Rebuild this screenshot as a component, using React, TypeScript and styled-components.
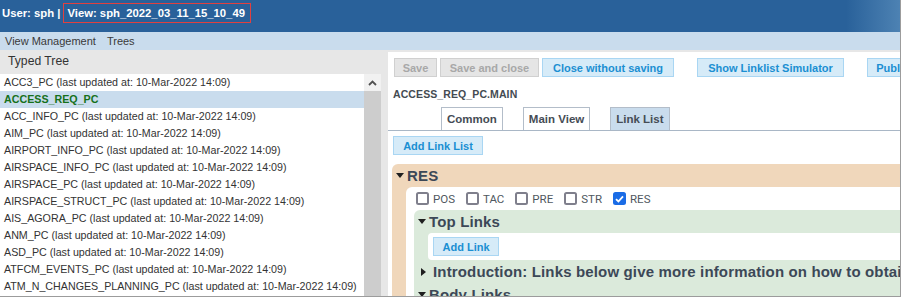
import React from 'react';
import styled, { createGlobalStyle } from 'styled-components';

const GlobalStyle = createGlobalStyle`
  body {
    margin: 0;
    background: #ffffff;
    font-family: "Liberation Sans", Arial, sans-serif;
  }
`;

const Frame = styled.div`
  width: 900px;
  height: 296px;
  border-right: 1px solid #9c9c9c;
  border-bottom: 1px solid #9c9c9c;
  display: flex;
  flex-direction: column;
  overflow: hidden;
  background: #e7e7e7;
`;

const TopBar = styled.div`
  height: 32px;
  flex-shrink: 0;
  box-sizing: border-box;
  padding: 3px 0 0 2px;
  display: flex;
  align-items: flex-start;
  background: linear-gradient(to right, #29619a 0%, #29619a 94%, #4d82b3 100%);
  color: #ffffff;
  font-weight: bold;
  font-size: 11.3px;
  white-space: nowrap;
`;

const UserText = styled.span`
  line-height: 20px;
  margin-right: 3px;
`;

const ViewBox = styled.span`
  height: 20px;
  line-height: 18px;
  box-sizing: border-box;
  padding: 0 5px 0 3px;
  border: 1px solid #e2403f;
`;

const MenuBar = styled.div`
  height: 18px;
  flex-shrink: 0;
  display: flex;
  align-items: center;
  background: #c9dced;
  font-size: 11px;
  color: #3a3a3a;
  padding-left: 5px;
  gap: 11px;
`;

const MenuItem = styled.span`
  line-height: 18px;
`;

const Body = styled.div`
  flex: 1;
  display: flex;
  min-height: 0;
`;

const LeftPanel = styled.div`
  width: 381px;
  flex-shrink: 0;
  display: flex;
  flex-direction: column;
`;

const PanelHeader = styled.div`
  height: 24px;
  box-sizing: border-box;
  padding: 4px 0 0 8px;
  font-size: 12.2px;
  color: #333;
`;

const ListArea = styled.div`
  flex: 1;
  display: flex;
  min-height: 0;
`;

const List = styled.div`
  width: 364px;
  background: #ffffff;
  overflow: hidden;
`;

const Row = styled.div<{ $selected?: boolean }>`
  height: 17px;
  line-height: 17px;
  padding-left: 4px;
  font-size: 10.7px;
  white-space: nowrap;
  background: ${p => (p.$selected ? '#c9dced' : 'transparent')};
  color: ${p => (p.$selected ? '#16701a' : '#333')};
  font-weight: ${p => (p.$selected ? 'bold' : 'normal')};
`;

const ScrollBar = styled.div`
  width: 17px;
  display: flex;
  flex-direction: column;
  background: #cdcdcd;
`;

const ScrollButton = styled.div`
  height: 17px;
  background: #f1f1f1;
  display: flex;
  align-items: center;
  justify-content: center;
`;

const RightPanel = styled.div`
  flex: 1;
  margin: 2px 0 0 7px;
  background: #ffffff;
  overflow: hidden;
  box-sizing: border-box;
  padding: 6px 0 0 5px;
  display: flex;
  flex-direction: column;
  align-items: flex-start;
`;

const ButtonRow = styled.div`
  display: flex;
  gap: 3px;
  flex-shrink: 0;
  margin-left: 1px;
`;

const Button = styled.div<{ $w: number; $disabled?: boolean; $spaced?: boolean }>`
  width: ${p => p.$w}px;
  height: 19px;
  box-sizing: border-box;
  flex-shrink: 0;
  display: flex;
  align-items: center;
  justify-content: center;
  white-space: nowrap;
  overflow: hidden;
  font-size: 11px;
  font-weight: bold;
  margin-left: ${p => (p.$spaced ? '20px' : '0')};
  background: ${p => (p.$disabled ? '#e5e5e5' : '#d6ebf8')};
  border: 1px solid ${p => (p.$disabled ? '#d0d0d0' : '#a9d6f3')};
  color: ${p => (p.$disabled ? '#a8a8a8' : '#1b8fd2')};
`;

const Title = styled.div`
  margin-top: 9px;
  height: 16px;
  line-height: 16px;
  font-size: 10.5px;
  font-weight: bold;
  color: #444b52;
  letter-spacing: 0.1px;
`;

const TabBar = styled.div`
  margin: 5px 0 0 -5px;
  padding-left: 53px;
  width: 700px;
  height: 24px;
  box-sizing: border-box;
  display: flex;
  align-items: flex-end;
  gap: 20px;
  border-bottom: 1px solid #a9b7c6;
  flex-shrink: 0;
`;

const Tab = styled.div<{ $active?: boolean }>`
  height: 23px;
  box-sizing: border-box;
  padding: 0 5px;
  display: flex;
  align-items: center;
  font-size: 11.5px;
  font-weight: bold;
  color: #454c55;
  border: 1px solid #b3bdc9;
  border-bottom: none;
  background: ${p => (p.$active ? '#c9dced' : '#ffffff')};
`;

const AddButton = styled(Button)`
  margin-top: 5px;
`;

const Section = styled.div<{ $tone: 'orange' | 'green' }>`
  flex-shrink: 0;
  border-radius: 6px;
  background: ${p => (p.$tone === 'orange' ? '#f0d7bb' : '#dbeadb')};
  padding-left: ${p => (p.$tone === 'orange' ? '14px' : '0')};
`;

const ResSection = styled(Section)`
  margin: 9px 0 0 -1px;
  width: 640px;
`;

const SectionHeader = styled.div<{ $indent: number }>`
  height: 23px;
  margin-left: ${p => p.$indent}px;
  display: flex;
  align-items: center;
  gap: 3px;
  font-size: 15px;
  font-weight: bold;
  color: #3c4857;
  white-space: nowrap;
  letter-spacing: 0.15px;
`;

const Caret = styled.span<{ $open?: boolean }>`
  width: 0;
  height: 0;
  flex-shrink: 0;
  margin-right: ${p => (p.$open ? '0' : '4px')};
  margin-left: ${p => (p.$open ? '0' : '3px')};
  border-style: solid;
  border-color: transparent;
  ${p =>
    p.$open
      ? 'border-width: 5px 4.5px 0 4.5px; border-top-color: #1f1f1f;'
      : 'border-width: 4.5px 0 4.5px 5px; border-left-color: #1f1f1f;'}
`;

const Inner = styled.div`
  background: #ffffff;
  border-radius: 6px 0 0 6px;
  padding-left: 8px;
`;

const CheckRow = styled.div`
  height: 23px;
  display: flex;
  align-items: center;
  padding-left: 2px;
`;

const CheckItem = styled.label`
  display: flex;
  align-items: center;
  gap: 4px;
  margin-right: 11px;
  font-family: Roboto, "Liberation Sans", sans-serif;
  font-size: 11.5px;
  color: #505860;
`;

const Box = styled.span<{ $checked?: boolean }>`
  width: 13px;
  height: 13px;
  box-sizing: border-box;
  border-radius: 2.5px;
  display: flex;
  align-items: center;
  justify-content: center;
  border: ${p => (p.$checked ? 'none' : '2px solid #7f7f8c')};
  background: ${p => (p.$checked ? '#1a6ce6' : '#ffffff')};
`;

const GreenSection = styled(Section)`
  border-radius: 6px 0 0 6px;
`;

const LinkBox = styled.div`
  margin-left: 14px;
  height: 27px;
  box-sizing: border-box;
  padding: 4px 0 0 5px;
  background: #ffffff;
  border-radius: 4px 0 0 4px;
`;

const items = [
  'ACC3_PC (last updated at: 10-Mar-2022 14:09)',
  'ACCESS_REQ_PC',
  'ACC_INFO_PC (last updated at: 10-Mar-2022 14:09)',
  'AIM_PC (last updated at: 10-Mar-2022 14:09)',
  'AIRPORT_INFO_PC (last updated at: 10-Mar-2022 14:09)',
  'AIRSPACE_INFO_PC (last updated at: 10-Mar-2022 14:09)',
  'AIRSPACE_PC (last updated at: 10-Mar-2022 14:09)',
  'AIRSPACE_STRUCT_PC (last updated at: 10-Mar-2022 14:09)',
  'AIS_AGORA_PC (last updated at: 10-Mar-2022 14:09)',
  'ANM_PC (last updated at: 10-Mar-2022 14:09)',
  'ASD_PC (last updated at: 10-Mar-2022 14:09)',
  'ATFCM_EVENTS_PC (last updated at: 10-Mar-2022 14:09)',
  'ATM_N_CHANGES_PLANNING_PC (last updated at: 10-Mar-2022 14:09)',
];

const checks = [
  { label: 'POS', checked: false },
  { label: 'TAC', checked: false },
  { label: 'PRE', checked: false },
  { label: 'STR', checked: false },
  { label: 'RES', checked: true },
];

const App: React.FC = () => {
  return (
    <>
      <GlobalStyle />
      <Frame>
        <TopBar>
          <UserText>User: sph |</UserText>
          <ViewBox>View: sph_2022_03_11_15_10_49</ViewBox>
        </TopBar>
        <MenuBar>
          <MenuItem>View Management</MenuItem>
          <MenuItem>Trees</MenuItem>
        </MenuBar>
        <Body>
          <LeftPanel>
            <PanelHeader>Typed Tree</PanelHeader>
            <ListArea>
              <List>
                {items.map((it, i) => (
                  <Row key={it} $selected={i === 1}>
                    {it}
                  </Row>
                ))}
              </List>
              <ScrollBar>
                <ScrollButton>
                  <svg width="9" height="6" viewBox="0 0 9 6">
                    <polyline points="1,5 4.5,1.5 8,5" fill="none" stroke="#505050" strokeWidth="1.8" />
                  </svg>
                </ScrollButton>
              </ScrollBar>
            </ListArea>
          </LeftPanel>
          <RightPanel>
            <ButtonRow>
              <Button $w={43} $disabled>Save</Button>
              <Button $w={99} $disabled>Save and close</Button>
              <Button $w={132}>Close without saving</Button>
              <Button $w={147} $spaced>Show Linklist Simulator</Button>
              <Button $w={58} $spaced>Publish</Button>
            </ButtonRow>
            <Title>ACCESS_REQ_PC.MAIN</Title>
            <TabBar>
              <Tab>Common</Tab>
              <Tab>Main View</Tab>
              <Tab $active>Link List</Tab>
            </TabBar>
            <AddButton $w={90}>Add Link List</AddButton>
            <ResSection $tone="orange">
              <SectionHeader $indent={-10}>
                <Caret $open />
                RES
              </SectionHeader>
              <Inner>
                <CheckRow>
                  {checks.map(c => (
                    <CheckItem key={c.label}>
                      <Box $checked={c.checked}>
                        {c.checked && (
                          <svg width="9" height="8" viewBox="0 0 9 8">
                            <polyline points="1,4.2 3.4,6.5 8,1.3" fill="none" stroke="#ffffff" strokeWidth="1.8" />
                          </svg>
                        )}
                      </Box>
                      {c.label}
                    </CheckItem>
                  ))}
                </CheckRow>
                <GreenSection $tone="green">
                  <SectionHeader $indent={4}>
                    <Caret $open />
                    Top Links
                  </SectionHeader>
                  <LinkBox>
                    <Button $w={66}>Add Link</Button>
                  </LinkBox>
                  <SectionHeader $indent={4}>
                    <Caret />
                    Introduction: Links below give more information on how to obtain access
                  </SectionHeader>
                  <SectionHeader $indent={4}>
                    <Caret $open />
                    Body Links
                  </SectionHeader>
                </GreenSection>
              </Inner>
            </ResSection>
          </RightPanel>
        </Body>
      </Frame>
    </>
  );
};

export default App;
